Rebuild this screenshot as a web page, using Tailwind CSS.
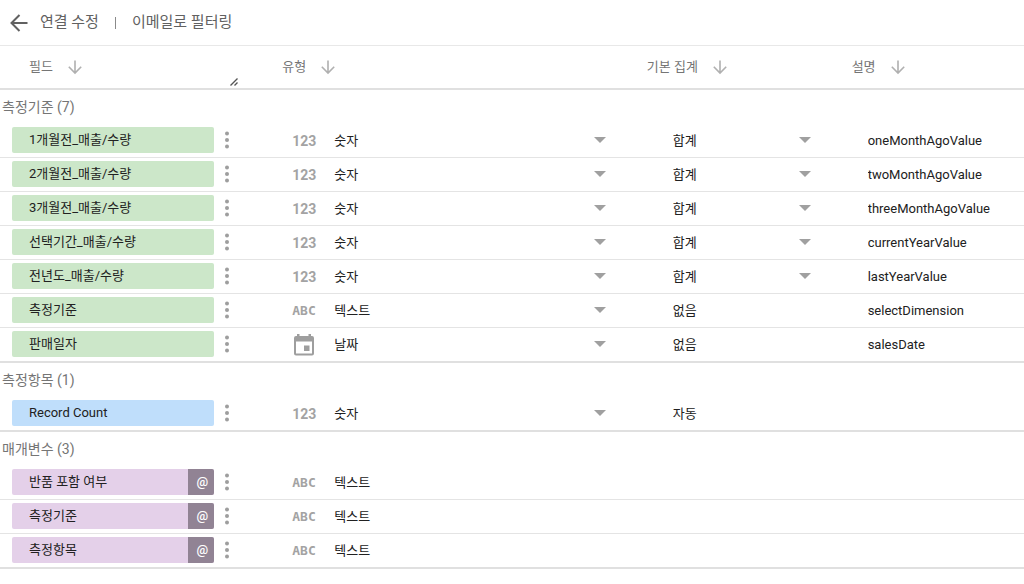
<!DOCTYPE html>
<html lang="ko">
<head>
    <meta charset="UTF-8">
    <meta name="viewport" content="width=device-width, initial-scale=1.0">
    <title>연결 수정</title>
    <script src="https://cdn.jsdelivr.net/npm/@tailwindcss/browser@4"></script>
</head>
<body class="bg-white font-[Roboto,'Noto_Sans_CJK_KR',sans-serif] text-[13px] text-[#212121]">
    <!-- Top bar -->
    <header class="flex h-[46px] items-center border-b border-[#e8e8e8] pl-[7px] text-[15px] text-[#616161]">
        <button type="button" aria-label="뒤로" class="mr-[9px]">
            <svg class="size-6" viewBox="0 0 24 24" fill="none" stroke="currentColor" stroke-width="2"><path d="M20.5 12H5M12.5 4 4.5 12l8 8"/></svg>
        </button>
        <a href="#">연결 수정</a>
        <span class="mx-4 h-3 w-px bg-[#8a8a8a]"></span>
        <h1>이메일로 필터링</h1>
    </header>

    <!-- Field table -->
    <table class="w-full table-fixed border-collapse text-left">
        <colgroup>
            <col class="w-[26%]">
            <col class="w-[36%]">
            <col class="w-[20%]">
            <col class="w-[18%]">
        </colgroup>
        <thead id="fieldHead"></thead>
        <tbody id="fieldBody"></tbody>
    </table>

    <script>
        const columns = [
            { label: '필드', pad: 'pl-[29px]', resizable: true },
            { label: '유형', pad: 'pl-4' },
            { label: '기본 집계', pad: 'pl-3' },
            { label: '설명', pad: 'pl-3' }
        ];

        const groups = [
            {
                title: '측정기준',
                color: 'bg-[#cce7c9]',
                fields: [
                    { name: '1개월전_매출/수량', type: '숫자', agg: '합계', desc: 'oneMonthAgoValue' },
                    { name: '2개월전_매출/수량', type: '숫자', agg: '합계', desc: 'twoMonthAgoValue' },
                    { name: '3개월전_매출/수량', type: '숫자', agg: '합계', desc: 'threeMonthAgoValue' },
                    { name: '선택기간_매출/수량', type: '숫자', agg: '합계', desc: 'currentYearValue' },
                    { name: '전년도_매출/수량', type: '숫자', agg: '합계', desc: 'lastYearValue' },
                    { name: '측정기준', type: '텍스트', agg: '없음', desc: 'selectDimension' },
                    { name: '판매일자', type: '날짜', agg: '없음', desc: 'salesDate' }
                ]
            },
            {
                title: '측정항목',
                color: 'bg-[#bfdefb]',
                fields: [
                    { name: 'Record Count', type: '숫자', agg: '자동', desc: '' }
                ]
            },
            {
                title: '매개변수',
                color: 'bg-[#e4d0e9]',
                param: true,
                fields: [
                    { name: '반품 포함 여부', type: '텍스트' },
                    { name: '측정기준', type: '텍스트' },
                    { name: '측정항목', type: '텍스트' }
                ]
            }
        ];

        const typeIcons = {
            '숫자': '<span class="font-[Liberation_Sans_Narrow,Roboto,sans-serif] text-sm font-bold text-[#a3a3a3]">123</span>',
            '텍스트': '<span class="font-[Liberation_Sans_Narrow,DejaVu_Sans_Mono,monospace] font-bold text-[#a3a3a3]">ABC</span>',
            '날짜': '<svg class="size-6 text-[#9e9e9e]" viewBox="0 0 24 24" fill="currentColor"><path fill-rule="evenodd" d="M5 1h2.500v2h9V1H19v2h1a2 2 0 0 1 2 2v15.500a2 2 0 0 1-2 2H4a2 2 0 0 1-2-2V5a2 2 0 0 1 2-2h1zM4 8.500v12h16V8.500zM12 12.500h5.500V18H12z"/></svg>'
        };

        function sortHeader(col) {
            return `
                <th scope="col" class="p-0 font-normal">
                    <div class="flex h-[42px] items-center ${col.pad}">
                        <button type="button" class="flex items-center gap-3">
                            ${col.label}
                            <svg class="size-5 text-[#b0b0b0]" viewBox="0 0 20 20" fill="none" stroke="currentColor" stroke-width="1.6"><path d="M10 3.500v12M3.800 9.800 10 16l6.200-6.200"/></svg>
                        </button>
                        ${col.resizable ? '<svg class="mr-7 mb-[2px] ml-auto size-2 self-end text-[#555]" viewBox="0 0 8 8" fill="none" stroke="currentColor" stroke-width="1.4"><path d="M.5 7.500l7-7M4.500 7.500l3-3"/></svg>' : ''}
                    </div>
                </th>`;
        }

        function dropdown(label, value) {
            return `
                <div class="relative flex-1">
                    <select aria-label="${label}" class="block w-full appearance-none outline-none"><option>${value}</option></select>
                    <svg class="pointer-events-none absolute top-[6px] right-0 h-[6px] w-3 text-[#a0a0a0]" viewBox="0 0 12 6" fill="currentColor"><path d="M0 0h12L6 6z"/></svg>
                </div>`;
        }

        function fieldRow(field, group, last) {
            return `
                <tr class="${last ? 'border-b-2 border-[#e0e0e0]' : 'border-b border-[#e4e4e4]'}">
                    <td class="p-0">
                        <div class="flex items-center pt-[3px] pr-8 pb-1 pl-3">
                            <div class="flex h-[26px] flex-1 items-center overflow-hidden rounded-xs pl-[17px] ${group.color}">
                                <span class="flex-1">${field.name}</span>
                                ${group.param ? '<span class="flex h-full w-[26px] items-center justify-center bg-[#918394] pl-[2px] font-medium text-white">@</span>' : ''}
                            </div>
                            <button type="button" aria-label="${field.name} 메뉴" class="ml-[6px] flex w-[14px] justify-center">
                                <svg class="h-[18px] w-1 text-[#9e9e9e]" viewBox="0 0 4 18" fill="currentColor"><circle cx="2" cy="2.500" r="2"/><circle cx="2" cy="9" r="2"/><circle cx="2" cy="15.500" r="2"/></svg>
                            </button>
                        </div>
                    </td>
                    <td class="p-0">
                        <div class="flex items-center pr-[29px] pl-[26px]">
                            <span class="flex w-[42px] items-center">${typeIcons[field.type]}</span>
                            ${group.param ? field.type : dropdown('유형', field.type)}
                        </div>
                    </td>
                    <td class="p-0">
                        <div class="flex items-center pr-[29px] pl-[38px]">
                            ${field.agg === '합계' ? dropdown('기본 집계', field.agg) : field.agg || ''}
                        </div>
                    </td>
                    <td class="p-0 pl-7">
                        ${field.desc === undefined ? '' : `<input type="text" aria-label="설명" value="${field.desc}" class="block w-full outline-none">`}
                    </td>
                </tr>`;
        }

        function renderGroup(group) {
            const rows = group.fields.map((field, i) => fieldRow(field, group, i === group.fields.length - 1));
            return `
                <tr>
                    <th colspan="4" scope="colgroup" class="h-[35px] p-0 pl-[2px] text-sm font-normal text-[#757575]">${group.title} (${group.fields.length})</th>
                </tr>
                ${rows.join('')}`;
        }

        document.getElementById('fieldHead').innerHTML =
            `<tr class="border-b-2 border-[#e0e0e0] text-[#757575]">${columns.map(sortHeader).join('')}</tr>`;
        document.getElementById('fieldBody').innerHTML = groups.map(renderGroup).join('');
    </script>
</body>
</html>
